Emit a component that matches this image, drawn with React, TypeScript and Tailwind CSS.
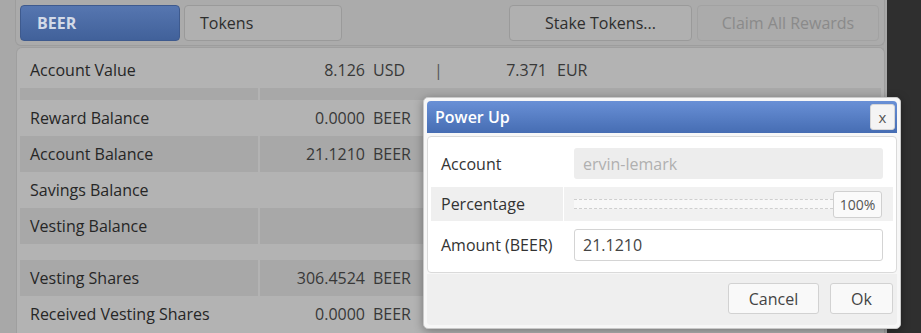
import React from 'react';

type Row = {
    label?: string;
    amount?: string;
    unit?: string;
    spacer?: boolean;
    height?: string;
};

const rows: Row[] = [
    { spacer: true, height: 'h-[12px]' },
    { label: 'Reward Balance', amount: '0.0000', unit: 'BEER' },
    { label: 'Account Balance', amount: '21.1210', unit: 'BEER' },
    { label: 'Savings Balance' },
    { label: 'Vesting Balance' },
    { spacer: true, height: 'h-[16px]' },
    { label: 'Vesting Shares', amount: '306.4524', unit: 'BEER' },
    { label: 'Received Vesting Shares', amount: '0.0000', unit: 'BEER' },
];

const PowerUpDialog: React.FC = () => {
    return (
        <div className="absolute left-[423px] top-[97px] w-[478px] rounded-[5px] border border-[#c9c9c9] bg-[#f7f7f7] p-[3px] shadow-[0_2px_10px_rgba(0,0,0,0.35)]">
            <div className="flex h-[32px] items-center justify-between rounded-t-[4px] bg-gradient-to-b from-[#6990d6] to-[#466db3] pl-[8px] pr-[2px]">
                <span className="text-[16px] font-semibold text-white">Power Up</span>
                <button className="flex h-[26px] w-[25px] items-center justify-center rounded-[3px] border border-[#d6d6d6] bg-[#f4f4f4] text-[15px] leading-none text-[#555]">
                    x
                </button>
            </div>
            <div className="mt-[3px] rounded-[4px] border border-[#dadada] bg-white p-[3px]">
                <div className="flex h-[47px] items-center">
                    <div className="w-[133px] pl-[10px] text-[16px] text-[#333]">Account</div>
                    <div className="flex-1 px-[10px]">
                        <div className="flex h-[31px] items-center rounded-[3px] bg-[#ededed] pl-[9px] text-[16px] text-[#b0b0b0]">
                            ervin-lemark
                        </div>
                    </div>
                </div>
                <div className="flex h-[34px]">
                    <div className="flex w-[132px] items-center bg-[#efefef] pl-[10px] text-[16px] text-[#333]">Percentage</div>
                    <div className="ml-[1px] flex flex-1 items-center bg-[#f1f1f1] pl-[10px] pr-[11px]">
                        <div className="h-[10px] flex-1 border-y border-dashed border-[#cfcfcf] bg-[#f8f8f8]" />
                        <div className="flex h-[27px] w-[49px] items-center justify-center rounded-[3px] border border-[#d0d0d0] bg-[#fafafa] text-[14px] text-[#555]">
                            100%
                        </div>
                    </div>
                </div>
                <div className="flex h-[48px] items-center">
                    <div className="w-[133px] pl-[10px] text-[16px] text-[#333]">Amount (BEER)</div>
                    <div className="flex-1 px-[10px]">
                        <div className="flex h-[32px] items-center rounded-[3px] border border-[#d4d4d4] bg-white pl-[8px] text-[16px] text-[#444]">
                            21.1210
                        </div>
                    </div>
                </div>
            </div>
            <div className="mt-[1px] flex h-[51px] items-start justify-end gap-[11px] rounded-b-[4px] bg-[#efefef] pr-[4px] pt-[9px]">
                <button className="h-[31px] w-[91px] rounded-[3px] border border-[#d2d2d2] bg-[#f9f9f9] text-[16px] text-[#444]">Cancel</button>
                <button className="h-[31px] w-[63px] rounded-[3px] border border-[#d2d2d2] bg-[#f9f9f9] text-[16px] text-[#444]">Ok</button>
            </div>
        </div>
    );
};

const App: React.FC = () => {
    return (
        <div className="relative flex h-[333px] w-[921px] overflow-hidden bg-[#a8a8a8] font-['Open_Sans',sans-serif]">
            <div className="w-[887px] shrink-0 pl-[15px] pr-[2px]">
                {/* toolbar */}
                <div className="flex h-[46px] items-start rounded-b-[6px] border-x border-b border-[#9d9d9d] bg-[#ababab] pl-[4px] pr-[5px] pt-[5px]">
                    <button className="flex h-[36px] w-[160px] items-center rounded-[4px] border border-[#3e5a8e] bg-gradient-to-b from-[#5676b0] to-[#41619a] pl-[16px] text-[16px] font-bold text-[#d3dae7]">
                        BEER
                    </button>
                    <button className="ml-[4px] flex h-[36px] w-[158px] items-center rounded-[4px] border border-[#9a9a9a] bg-[#b0b0b0] pl-[15px] text-[16px] text-[#2e2e2e]">
                        Tokens
                    </button>
                    <div className="flex-1" />
                    <button className="h-[36px] w-[183px] rounded-[4px] border border-[#9a9a9a] bg-[#b0b0b0] text-[16px] text-[#2e2e2e]">
                        Stake Tokens...
                    </button>
                    <button className="ml-[5px] h-[36px] w-[182px] rounded-[4px] border border-[#a2a2a2] bg-[#ababab] text-[16px] text-[#8a8a8a]">
                        Claim All Rewards
                    </button>
                </div>
                {/* balances */}
                <div className="ml-[1px] mt-[1px] h-[300px] rounded-t-[6px] border-x border-t border-[#9f9f9f] bg-[#b3b3b3] px-[3px] pt-[3px] text-[16px]">
                    <div className="flex h-[37px] items-center">
                        <div className="w-[240px] pl-[10px] text-[#262626]">Account Value</div>
                        <span className="w-[105px] text-right text-[#383838]">8.126</span>
                        <span className="w-[60px] pl-[8px] text-[#383838]">USD</span>
                        <span className="w-[27px] text-center text-[#555]">|</span>
                        <span className="w-[95px] text-right text-[#383838]">7.371</span>
                        <span className="pl-[10px] text-[#383838]">EUR</span>
                    </div>
                    {rows.map((row, i) => {
                        const striped = i % 2 === 0;
                        const cell = striped ? 'bg-[#a8a8a8]' : '';
                        return (
                            <div key={i} className={`flex ${row.spacer ? row.height : 'h-[36px]'}`}>
                                <div className={`flex w-[238px] items-center pl-[10px] text-[#262626] ${cell}`}>
                                    {row.label}
                                </div>
                                <div className={`ml-[2px] flex flex-1 items-center ${cell}`}>
                                    {row.amount && (
                                        <>
                                            <span className="w-[105px] text-right text-[#383838]">{row.amount}</span>
                                            <span className="pl-[8px] text-[#383838]">{row.unit}</span>
                                        </>
                                    )}
                                </div>
                            </div>
                        );
                    })}
                </div>
            </div>
            <div className="flex-1 bg-[#2f2f2f]" />
            <PowerUpDialog />
        </div>
    );
};

export default App;
